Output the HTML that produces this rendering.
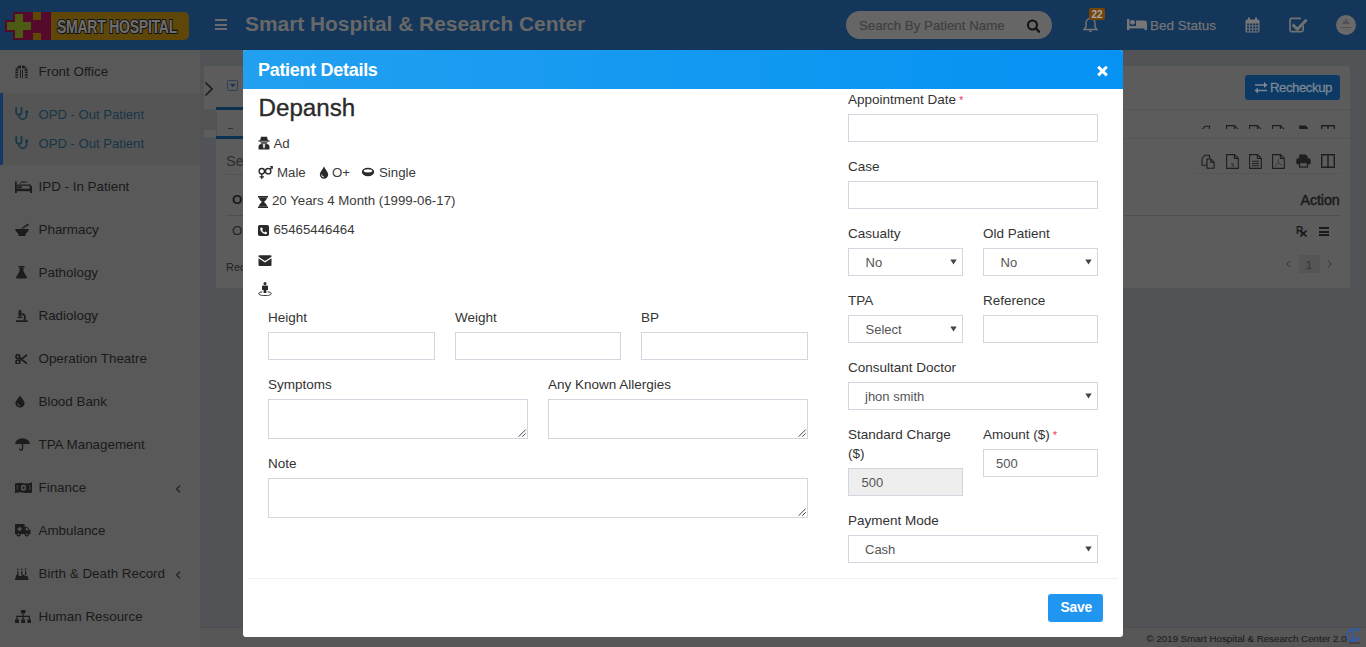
<!DOCTYPE html>
<html><head><meta charset="utf-8">
<style>
*{box-sizing:border-box;margin:0;padding:0}
html,body{width:1366px;height:647px;overflow:hidden}
body{position:relative;font-family:"Liberation Sans",sans-serif;font-size:13.5px;color:#333;background:#525356}
.abs{position:absolute}
.tx{position:absolute;white-space:nowrap;line-height:1}
#hdr{left:0;top:0;width:1366px;height:50px;background:#13365a}
#side{left:0;top:50px;width:200px;height:597px;background:#595959}
.si{position:absolute;left:0;width:200px;height:43px;color:#2b2b2b;font-size:13.5px}
.si .t{position:absolute;left:38px;top:13px;white-space:nowrap}
.si .ic{position:absolute;left:14px;top:14px;width:13px;height:13px}
.si .ch{position:absolute;left:175px;top:12px;font-size:13px}
#modal{left:243px;top:50px;width:880px;height:587px;background:#fff;border-radius:3px;overflow:hidden}
#mh{left:0;top:0;width:880px;height:39px;background:linear-gradient(90deg,#22a0f0,#0592f3)}
#mh .title{position:absolute;left:15px;top:10px;color:#fff;font-weight:bold;font-size:18px;letter-spacing:-0.3px}
.lbl{position:absolute;white-space:nowrap;color:#333;font-size:13.5px}
.inp{position:absolute;border:1px solid #d2d6de;background:#fff;height:28px}
.sel{position:absolute;border:1px solid #d2d6de;background:#fff;height:28px}
.sel .v{position:absolute;left:16px;top:6px;color:#555;font-size:13.5px}
.sel .ar{position:absolute;right:5px;top:6px;font-size:10px;color:#333}
.req{color:#e8384f}
</style></head><body>
<div id="hdr" class="abs">
  <!-- logo -->
  <div class="abs" style="left:13px;top:12px;width:176px;height:28px;background:#5e4709;border-radius:0 5px 5px 0"></div>
  <div class="abs" style="left:13px;top:12px;width:38px;height:28px;background:#560a2b"></div>
  <div class="abs" style="left:33px;top:12px;width:8px;height:8px;background:#5e4709"></div>
  <div class="abs" style="left:33px;top:33px;width:8px;height:7px;background:#5e4709"></div>
  <div class="abs" style="left:5px;top:20px;width:28px;height:12px;background:#560a2b"></div>
  <div class="abs" style="left:15px;top:14px;width:8px;height:24px;background:#4c5a14"></div>
  <div class="abs" style="left:7px;top:22px;width:24px;height:8px;background:#4c5a14"></div>
  <div class="tx" style="left:56.5px;top:17px;font-weight:bold;font-size:19px;color:#6e6e6e;-webkit-text-stroke:2.2px #141414;paint-order:stroke fill;transform:scaleX(0.735);transform-origin:0 0;letter-spacing:-0.3px">SMART HOSPITAL</div>
  <!-- hamburger -->
  <div class="abs" style="left:215px;top:19px;width:12px;height:2px;background:#6b6b6b"></div>
  <div class="abs" style="left:215px;top:23.5px;width:12px;height:2px;background:#6b6b6b"></div>
  <div class="abs" style="left:215px;top:28px;width:12px;height:2px;background:#6b6b6b"></div>
  <div class="abs" style="left:245px;top:12px;font-weight:bold;font-size:20.9px;color:#686868;white-space:nowrap">Smart Hospital &amp; Research Center</div>
  <!-- search -->
  <div class="abs" style="left:846px;top:11px;width:206px;height:28px;background:#666;border-radius:14px"></div>
  <div class="abs" style="left:859px;top:17.5px;font-size:13.3px;color:#404040;-webkit-text-stroke:0.2px #404040;white-space:nowrap">Search By Patient Name</div>
  <svg class="abs" style="left:1026px;top:19px" width="16" height="14" viewBox="0 0 16 14"><circle cx="6.5" cy="6" r="4.5" fill="none" stroke="#111" stroke-width="2"/><line x1="9.7" y1="9.3" x2="13" y2="12.6" stroke="#111" stroke-width="2.2" stroke-linecap="round"/></svg>
  <!-- bell -->
  <svg class="abs" style="left:1082px;top:17px" width="17" height="16" viewBox="0 0 17 16"><path d="M8.5 1.5c-3 0-4.5 2.3-4.5 5v3.5l-2 2.5h13l-2-2.5V6.5c0-2.7-1.5-5-4.5-5z" fill="none" stroke="#777" stroke-width="1.4"/><path d="M7 13.5a1.5 1.5 0 0 0 3 0z" fill="#777"/></svg>
  <div class="abs" style="left:1089px;top:8px;width:16px;height:12px;background:#764507;border-radius:2px;color:#a9a9a9;font-weight:bold;font-size:10px;line-height:13px;text-align:center">22</div>
  <!-- bed -->
  <svg class="abs" style="left:1127px;top:19px" width="20" height="11.3" viewBox="0 0 20 12" preserveAspectRatio="none"><rect x="0" y="0" width="2.5" height="12" fill="#777"/><circle cx="5.5" cy="3.5" r="2.5" fill="#777"/><path d="M9 1.5h8a3 3 0 0 1 3 3V8H9z" fill="#777"/><rect x="0" y="7.5" width="20" height="2.5" fill="#777"/><rect x="17.5" y="7.5" width="2.5" height="4.5" fill="#777"/></svg>
  <div class="abs" style="left:1150px;top:17.5px;font-size:13.5px;color:#747474;white-space:nowrap;-webkit-text-stroke:0.25px #747474">Bed Status</div>
  <!-- calendar -->
  <svg class="abs" style="left:1245px;top:17px" width="15" height="16" viewBox="0 0 15 16"><rect x="0.5" y="2.5" width="14" height="13" rx="1.5" fill="#777"/><rect x="3" y="0.5" width="2" height="4" fill="#777"/><rect x="10" y="0.5" width="2" height="4" fill="#777"/><g fill="#13365a"><rect x="2" y="6.5" width="2.2" height="2"/><rect x="5.1" y="6.5" width="2.2" height="2"/><rect x="8.2" y="6.5" width="2.2" height="2"/><rect x="11.2" y="6.5" width="2" height="2"/><rect x="2" y="9.5" width="2.2" height="2"/><rect x="5.1" y="9.5" width="2.2" height="2"/><rect x="8.2" y="9.5" width="2.2" height="2"/><rect x="11.2" y="9.5" width="2" height="2"/><rect x="2" y="12.5" width="2.2" height="2"/><rect x="5.1" y="12.5" width="2.2" height="2"/><rect x="8.2" y="12.5" width="2.2" height="2"/><rect x="11.2" y="12.5" width="2" height="2"/></g></svg>
  <!-- check -->
  <svg class="abs" style="left:1289px;top:17px" width="19" height="16" viewBox="0 0 19 16"><path d="M14.2 8.5v4.3a1.8 1.8 0 0 1-1.8 1.8H2.8A1.8 1.8 0 0 1 1 12.8V3.2A1.8 1.8 0 0 1 2.8 1.4h9.2" fill="none" stroke="#727272" stroke-width="1.7"/><path d="M3.6 7.6l4.8 4.6 9.2-9.4" fill="none" stroke="#727272" stroke-width="2.9"/></svg>
  <!-- avatar -->
  <div class="abs" style="left:1336px;top:15px;width:20px;height:20px;border-radius:50%;background:#6a6a6a"></div>
  <svg class="abs" style="left:1336px;top:15px" width="20" height="20" viewBox="0 0 20 20"><g fill="#4e4e4e"><circle cx="10" cy="5" r="0.9"/><path d="M7.5 6.3h5l0.8 1.5H6.7z"/><rect x="6.5" y="8.2" width="7" height="0.9"/><rect x="4.5" y="12" width="11" height="1.1" opacity="0.8"/><rect x="7" y="14.6" width="6" height="0.5" opacity="0.6"/></g></svg>
</div>
<div id="side" class="abs"></div>
<div id="sidec">
<div class="abs" style="left:0;top:93px;width:200px;height:72px;background:#555"></div>
<div class="abs" style="left:0;top:93px;width:3px;height:72px;background:#133a63"></div>
<div class="tx" style="left:38.5px;top:64.66px;font-size:13.4px;color:#1a1a1a;">Front Office</div>
<div class="tx" style="left:38.5px;top:179.66px;font-size:13.4px;color:#1a1a1a;">IPD - In Patient</div>
<div class="tx" style="left:38.5px;top:222.66px;font-size:13.4px;color:#1a1a1a;">Pharmacy</div>
<div class="tx" style="left:38.5px;top:265.66px;font-size:13.4px;color:#1a1a1a;">Pathology</div>
<div class="tx" style="left:38.5px;top:308.66px;font-size:13.4px;color:#1a1a1a;">Radiology</div>
<div class="tx" style="left:38.5px;top:351.66px;font-size:13.4px;color:#1a1a1a;">Operation Theatre</div>
<div class="tx" style="left:38.5px;top:394.66px;font-size:13.4px;color:#1a1a1a;">Blood Bank</div>
<div class="tx" style="left:38.5px;top:437.66px;font-size:13.4px;color:#1a1a1a;">TPA Management</div>
<div class="tx" style="left:38.5px;top:480.66px;font-size:13.4px;color:#1a1a1a;">Finance</div>
<svg class="abs" style="left:175px;top:484.5px" width="6" height="8" viewBox="0 0 6 8"><path d="M5 0.8L1.5 4 5 7.2" fill="none" stroke="#222" stroke-width="1.2"/></svg>
<div class="tx" style="left:38.5px;top:523.66px;font-size:13.4px;color:#1a1a1a;">Ambulance</div>
<div class="tx" style="left:38.5px;top:566.66px;font-size:13.4px;color:#1a1a1a;">Birth &amp; Death Record</div>
<svg class="abs" style="left:175px;top:570.5px" width="6" height="8" viewBox="0 0 6 8"><path d="M5 0.8L1.5 4 5 7.2" fill="none" stroke="#222" stroke-width="1.2"/></svg>
<div class="tx" style="left:38.5px;top:609.66px;font-size:13.4px;color:#1a1a1a;">Human Resource</div>
<div class="tx" style="left:38.5px;top:107.91px;font-size:13.1px;color:#163648;">OPD - Out Patient</div>
<svg class="abs" style="left:14px;top:106px" width="15" height="15" viewBox="0 0 15 15" preserveAspectRatio="none"><path d="M3.2 2.1H2.1v4a2.75 2.75 0 0 0 5.5 0v-4H6.5" fill="none" stroke="#163648" stroke-width="1.6"/><path d="M4.85 8.8v0.5a3.9 3.9 0 0 0 7.8 0V6.5" fill="none" stroke="#163648" stroke-width="1.6"/><circle cx="12.65" cy="5.9" r="1.6" fill="#163648"/></svg>
<div class="tx" style="left:38.5px;top:136.51px;font-size:13.1px;color:#163648;">OPD - Out Patient</div>
<svg class="abs" style="left:14px;top:135px" width="15" height="15" viewBox="0 0 15 15" preserveAspectRatio="none"><path d="M3.2 2.1H2.1v4a2.75 2.75 0 0 0 5.5 0v-4H6.5" fill="none" stroke="#163648" stroke-width="1.6"/><path d="M4.85 8.8v0.5a3.9 3.9 0 0 0 7.8 0V6.5" fill="none" stroke="#163648" stroke-width="1.6"/><circle cx="12.65" cy="5.9" r="1.6" fill="#163648"/></svg>
<svg class="abs" style="left:15px;top:65px" width="13" height="13" viewBox="0 0 13 13" preserveAspectRatio="none"><path d="M6.5 0.3a6.2 6.2 0 0 1 6.2 6.2V13h-2.8V6.5a3.4 3.4 0 0 0-6.8 0V13H0.3V6.5A6.2 6.2 0 0 1 6.5 0.3z" fill="#1c1c1c"/><g fill="#595959"><rect x="0" y="8.2" width="13" height="1"/><rect x="0" y="10.8" width="13" height="1"/><rect x="0" y="5.7" width="13" height="0.9"/><path d="M2.2 2.2l1.6 1.6-.7.7-1.6-1.6zM10.8 2.2l-1.6 1.6.7.7 1.6-1.6z"/><rect x="6" y="0" width="1" height="2.9"/></g><g fill="#1c1c1c"><rect x="5.1" y="4.6" width="0.9" height="8.4"/><rect x="7" y="4.6" width="0.9" height="8.4"/></g></svg>
<svg class="abs" style="left:15px;top:180px" width="17" height="13" viewBox="0 0 17 13" preserveAspectRatio="none"><g fill="#1c1c1c"><rect x="0" y="1.5" width="1.8" height="11.5"/><rect x="0" y="9.3" width="17" height="1.9"/><rect x="15.2" y="6" width="1.8" height="7"/><path d="M3 5.2h12.2v4.1H3z" fill="none" stroke="#1c1c1c" stroke-width="1.3"/><circle cx="5.3" cy="7.2" r="1.3"/><path d="M5.2 3.6l2.1-2.6 1.6 2 1.5-1.6 1.8 1.2" fill="none" stroke="#1c1c1c" stroke-width="1"/></g></svg>
<svg class="abs" style="left:15px;top:222.5px" width="14" height="13" viewBox="0 0 14 13" preserveAspectRatio="none"><g fill="#1c1c1c"><path d="M0.3 6h13.4a6 5 0 0 1-3 4.4v1.6a1 1 0 0 1-1 1H4.3a1 1 0 0 1-1-1v-1.6A6 5 0 0 1 0.3 6z"/><path d="M6 5.6l6.8-5.1 1.1 1.4L8.2 5.6z"/></g></svg>
<svg class="abs" style="left:15.5px;top:266px" width="11" height="12.5" viewBox="0 0 11 12.5" preserveAspectRatio="none"><g fill="#1c1c1c"><rect x="2.5" y="0" width="6" height="1.5"/><path d="M3.6 1.5h3.8v3.8l3.4 5.8a1 1 0 0 1-.9 1.4H1.1a1 1 0 0 1-.9-1.4l3.4-5.8z"/></g></svg>
<svg class="abs" style="left:15.5px;top:310px" width="13" height="12" viewBox="0 0 13 12" preserveAspectRatio="none"><g fill="#1c1c1c"><rect x="2.6" y="0" width="2.8" height="6.2" rx="1"/><rect x="1.8" y="6.6" width="4.4" height="1.5"/><path d="M5.6 3.8a3.7 3.7 0 0 1 2.3 6.4" fill="none" stroke="#1c1c1c" stroke-width="1.8"/><rect x="0" y="10.3" width="11.8" height="1.7"/></g></svg>
<svg class="abs" style="left:14.5px;top:353.5px" width="12.5" height="10.5" viewBox="0 0 12.5 10.5" preserveAspectRatio="none"><g fill="none" stroke="#1c1c1c" stroke-width="1.7"><circle cx="2.9" cy="2.6" r="1.9"/><circle cx="2.9" cy="7.9" r="1.9"/><path d="M4.5 3.8L12.2 9.8M4.5 6.7L12.2 0.7"/></g></svg>
<svg class="abs" style="left:14.7px;top:395px" width="10" height="12.5" viewBox="0 0 10 12.5" preserveAspectRatio="none"><path d="M5 0.2C3.5 3.3 0.4 5.8 0.4 8.2a4.6 4.3 0 0 0 9.2 0C9.6 5.8 6.5 3.3 5 0.2z" fill="#1c1c1c"/><path d="M2.6 8.4a2.4 2.3 0 0 0 2.4 2.2" fill="none" stroke="#595959" stroke-width="1"/></svg>
<svg class="abs" style="left:14.7px;top:438px" width="15" height="13" viewBox="0 0 15 13" preserveAspectRatio="none"><path d="M0 6.2A7.5 6 0 0 1 15 6.2c-.8-.7-1.8-.7-2.5 0-.8-.7-1.8-.7-2.5 0-.8-.7-1.8-.7-2.5 0-.8-.7-1.8-.7-2.5 0-.8-.7-1.8-.7-2.5 0-.8-.7-1.8-.7-2.5 0z" fill="#1c1c1c"/><path d="M7.5 5v5.8a1.4 1.4 0 0 1-2.8 0" fill="none" stroke="#1c1c1c" stroke-width="1.4"/></svg>
<svg class="abs" style="left:14.7px;top:481.5px" width="17" height="11.5" viewBox="0 0 17 11.5" preserveAspectRatio="none"><path d="M0 1.5Q4 0 8.5 1.2T17 0.2v10.3q-4 1.5-8.5 0.3T0 11.3z" fill="#1c1c1c"/><ellipse cx="8.5" cy="5.8" rx="2.6" ry="3" fill="#595959"/><circle cx="8.5" cy="5.8" r="1.2" fill="#1c1c1c"/><rect x="1.5" y="3" width="1.6" height="5" fill="#595959" opacity=".45"/><rect x="13.9" y="3" width="1.6" height="5" fill="#595959" opacity=".45"/></svg>
<svg class="abs" style="left:15.3px;top:524px" width="15.5" height="12.5" viewBox="0 0 15.5 12.5" preserveAspectRatio="none"><g fill="#1c1c1c"><path d="M0 0.8a.8.8 0 0 1 .8-.8h8.7v2.8h2.6l3.4 3.8V10H0z"/><circle cx="3.6" cy="10.3" r="2.2"/><circle cx="11.8" cy="10.3" r="2.2"/></g><path d="M2.5 5h4.2M4.6 2.9v4.2" stroke="#595959" stroke-width="1.5"/><circle cx="3.6" cy="10.3" r="0.9" fill="#595959"/><circle cx="11.8" cy="10.3" r="0.9" fill="#595959"/><path d="M10.6 3.8h1.3l2 2.4h-3.3z" fill="#595959"/></svg>
<svg class="abs" style="left:15.3px;top:567.5px" width="13.5" height="12" viewBox="0 0 13.5 12" preserveAspectRatio="none"><g fill="#1c1c1c"><path d="M0.8 7.5q1.5-1.3 3-0t3 0 3 0 3 0V10.6H0.8z"/><rect x="2.3" y="3.2" width="1.2" height="3.8"/><rect x="6.15" y="3.2" width="1.2" height="3.8"/><rect x="10" y="3.2" width="1.2" height="3.8"/><path d="M2.9 0l.8 1.5-.8 1.1-.8-1.1zM6.75 0l.8 1.5-.8 1.1-.8-1.1zM10.6 0l.8 1.5-.8 1.1-.8-1.1z"/><rect x="0" y="10.3" width="13.5" height="1.7"/></g></svg>
<svg class="abs" style="left:15px;top:609.5px" width="16.3" height="13" viewBox="0 0 16.3 13" preserveAspectRatio="none"><g fill="#1c1c1c"><rect x="5.9" y="0" width="4.5" height="3.4"/><rect x="0" y="9.4" width="3.9" height="3.6"/><rect x="6.2" y="9.4" width="3.9" height="3.6"/><rect x="12.4" y="9.4" width="3.9" height="3.6"/></g><path d="M8.15 3.4v6M1.95 9.4V6.4h12.4v3" fill="none" stroke="#1c1c1c" stroke-width="1.2"/></svg>
</div><!--/sidec-->

<div id="content">
<div class="abs" style="left:203px;top:65px;width:1148px;height:44px;background:#5c5c5c;border:1px solid #4f5656;border-bottom:none;border-radius:3px 3px 0 0"></div>
<svg class="abs" style="left:204px;top:81px" width="10" height="16" viewBox="0 0 10 16"><path d="M1.5 1.5L8 8 1.5 14.5" fill="none" stroke="#1a1a1a" stroke-width="1.6"/></svg>
<div class="abs" style="left:227px;top:80px;width:11px;height:11px;border:1.3px solid #2c3e58;border-radius:1.5px"></div>
<svg class="abs" style="left:230px;top:84px" width="6" height="4" viewBox="0 0 6 4"><path d="M0 0h5.5L2.75 3z" fill="#12324f"/></svg>
<div class="abs" style="left:1245px;top:75px;width:95px;height:25px;background:#0c3a64;border-radius:3px"></div>
<svg class="abs" style="left:1254px;top:81px" width="14" height="13" viewBox="0 0 14 13"><g fill="#7b8794"><path d="M1 3.2h9V1l3.5 3-3.5 3V4.8H1z"/><path d="M13 8.8H4V6.5L0.5 9.5 4 12.5v-2.2h9z"/></g></svg>
<div class="tx" style="left:1270px;top:81.33px;font-size:13.2px;color:#7b8794;letter-spacing:-0.45px;-webkit-text-stroke:0.3px #7b8794">Recheckup</div>
<div class="abs" style="left:203px;top:109px;width:1148px;height:1px;background:#4f5656"></div>
<div class="abs" style="left:216px;top:107px;width:200px;height:3px;background:#0c3050"></div>
<div class="abs" style="left:216px;top:109px;width:1135px;height:29px;background:#5c5c5c;border-left:1px solid #4f5656;border-right:1px solid #4f5656"></div>
<div class="abs" style="left:203px;top:109px;width:13px;height:20px;background:#545454"></div>
<div class="abs" style="left:203px;top:129px;width:13px;height:9px;background:#5e5e5e;border:1px solid #4f5656;border-right:none"></div>
<div class="abs" style="left:216px;top:110px;width:1px;height:28px;background:#4f5656"></div>
<div class="abs" style="left:228px;top:128px;width:5px;height:1px;background:#333"></div>
<div class="abs" style="left:203px;top:138px;width:1147px;height:1px;background:#4f5656"></div>
<div class="abs" style="left:216px;top:136px;width:200px;height:3px;background:#0c3050"></div>
<div class="abs" style="left:215px;top:138px;width:1136px;height:151px;background:#5c5c5c;border:1px solid #4f5656;border-top:none;border-radius:0 0 3px 3px"></div>
<div class="tx" style="left:226px;top:154.23px;font-size:14.5px;color:#2e2e2e;">Search</div>
<div class="abs" style="left:226px;top:174px;width:600px;height:1px;background:#535353"></div>
<div class="tx" style="left:232px;top:192.74px;font-size:13.3px;color:#1a1a1a;font-weight:bold;">OPD No</div>
<div class="abs" style="left:226px;top:215px;width:1114px;height:1px;background:#4f4f4f"></div>
<div class="tx" style="left:232px;top:223.74px;font-size:13.3px;color:#222;">OPDN1</div>
<div class="abs" style="left:226px;top:245px;width:1114px;height:1px;background:#595959"></div>
<div class="tx" style="left:226px;top:261.69px;font-size:11px;color:#222;">Records: 1 to 1 of 1</div>
<div class="tx" style="left:1300.5px;top:192.90px;font-size:14.3px;color:#1a1a1a;-webkit-text-stroke:0.45px #1a1a1a;letter-spacing:-0.1px">Action</div>
<div class="tx" style="left:1296px;top:225.53px;font-size:10px;color:#1a1a1a;font-weight:bold">R</div>
<svg class="abs" style="left:1300px;top:230px" width="7" height="7" viewBox="0 0 7 7"><path d="M0.5 0.5l6 6M6.5 0.5l-6 6" stroke="#1a1a1a" stroke-width="1.6"/></svg>
<div class="abs" style="left:1319px;top:227px;width:10px;height:2px;background:#1a1a1a"></div>
<div class="abs" style="left:1319px;top:230.5px;width:10px;height:2px;background:#1a1a1a"></div>
<div class="abs" style="left:1319px;top:234px;width:10px;height:2px;background:#1a1a1a"></div>
<svg class="abs" style="left:1286px;top:260px" width="5" height="8" viewBox="0 0 5 8"><path d="M4 0.5L1 4l3 3.5" fill="none" stroke="#333" stroke-width="1"/></svg>
<div class="abs" style="left:1299px;top:255px;width:21px;height:18px;background:#555"></div>
<div class="tx" style="left:1306px;top:259.69px;font-size:11px;color:#333;">1</div>
<svg class="abs" style="left:1327px;top:260px" width="5" height="8" viewBox="0 0 5 8"><path d="M1 0.5L4 4 1 7.5" fill="none" stroke="#333" stroke-width="1"/></svg>
<svg class="abs" style="left:1201px;top:154px" width="15" height="15" viewBox="0 0 15 15"><g fill="none" stroke="#1e1e1e" stroke-width="1.1"><path d="M1 4.5L4 1.2h4.5v3.3"/><path d="M1 4.5v6.8h4.6"/><path d="M6 5h3.8l3.3 3.2v6H6z"/><path d="M9.8 5v3.2h3.3"/></g></svg>
<div class="abs" style="left:1201px;top:125px;width:15px;height:4px;overflow:hidden"><svg class="abs" style="left:0px;top:0px" width="15" height="15" viewBox="0 0 15 15"><g fill="none" stroke="#1e1e1e" stroke-width="1.1"><path d="M1 4.5L4 1.2h4.5v3.3"/><path d="M1 4.5v6.8h4.6"/><path d="M6 5h3.8l3.3 3.2v6H6z"/><path d="M9.8 5v3.2h3.3"/></g></svg></div>
<svg class="abs" style="left:1226px;top:154px" width="13" height="15" viewBox="0 0 13 15"><g fill="none" stroke="#1e1e1e" stroke-width="1.1"><path d="M0.6 0.6h7.8l3.9 3.9v9.9H0.6z"/><path d="M8.4 0.6v3.9h3.9"/></g><text x="6.4" y="12.6" font-family="Liberation Serif" font-size="8" text-anchor="middle" fill="#1e1e1e">x</text></svg>
<div class="abs" style="left:1226px;top:125px;width:13px;height:4px;overflow:hidden"><svg class="abs" style="left:0px;top:0px" width="13" height="15" viewBox="0 0 13 15"><g fill="none" stroke="#1e1e1e" stroke-width="1.1"><path d="M0.6 0.6h7.8l3.9 3.9v9.9H0.6z"/><path d="M8.4 0.6v3.9h3.9"/></g><text x="6.4" y="12.6" font-family="Liberation Serif" font-size="8" text-anchor="middle" fill="#1e1e1e">x</text></svg></div>
<svg class="abs" style="left:1249px;top:154px" width="13" height="15" viewBox="0 0 13 15"><g fill="none" stroke="#1e1e1e" stroke-width="1.1"><path d="M0.6 0.6h7.8l3.9 3.9v9.9H0.6z"/><path d="M8.4 0.6v3.9h3.9M3 7.3h7M3 9.5h7M3 11.7h7"/></g></svg>
<div class="abs" style="left:1249px;top:125px;width:13px;height:4px;overflow:hidden"><svg class="abs" style="left:0px;top:0px" width="13" height="15" viewBox="0 0 13 15"><g fill="none" stroke="#1e1e1e" stroke-width="1.1"><path d="M0.6 0.6h7.8l3.9 3.9v9.9H0.6z"/><path d="M8.4 0.6v3.9h3.9M3 7.3h7M3 9.5h7M3 11.7h7"/></g></svg></div>
<svg class="abs" style="left:1272px;top:154px" width="13" height="15" viewBox="0 0 13 15"><g fill="none" stroke="#1e1e1e" stroke-width="1.1"><path d="M0.6 0.6h7.8l3.9 3.9v9.9H0.6z"/><path d="M8.4 0.6v3.9h3.9"/></g><path d="M6.3 5v3.5L3.2 12.3M6.3 8.5l3.6 3" fill="none" stroke="#3a2a44" stroke-width="0.8"/></svg>
<div class="abs" style="left:1272px;top:125px;width:13px;height:4px;overflow:hidden"><svg class="abs" style="left:0px;top:0px" width="13" height="15" viewBox="0 0 13 15"><g fill="none" stroke="#1e1e1e" stroke-width="1.1"><path d="M0.6 0.6h7.8l3.9 3.9v9.9H0.6z"/><path d="M8.4 0.6v3.9h3.9"/></g><path d="M6.3 5v3.5L3.2 12.3M6.3 8.5l3.6 3" fill="none" stroke="#3a2a44" stroke-width="0.8"/></svg></div>
<svg class="abs" style="left:1296px;top:154px" width="15" height="14" viewBox="0 0 15 14"><g fill="#1e1e1e"><path d="M3.2 0.6h6.5l2 2v2.2H3.2z"/><rect x="0.3" y="4.3" width="14.4" height="6.2" rx="1.8"/></g><rect x="3.6" y="8.5" width="7.8" height="4.6" fill="#595959" stroke="#1e1e1e" stroke-width="1.2"/></svg>
<div class="abs" style="left:1296px;top:125px;width:15px;height:4px;overflow:hidden"><svg class="abs" style="left:0px;top:0px" width="15" height="14" viewBox="0 0 15 14"><g fill="#1e1e1e"><path d="M3.2 0.6h6.5l2 2v2.2H3.2z"/><rect x="0.3" y="4.3" width="14.4" height="6.2" rx="1.8"/></g><rect x="3.6" y="8.5" width="7.8" height="4.6" fill="#595959" stroke="#1e1e1e" stroke-width="1.2"/></svg></div>
<svg class="abs" style="left:1321px;top:154px" width="14" height="14" viewBox="0 0 14 14"><path d="M0.7 0.7h12.6v12.6H0.7zM7 0.7v12.6" fill="none" stroke="#1e1e1e" stroke-width="1.4"/></svg>
<div class="abs" style="left:1321px;top:125px;width:14px;height:4px;overflow:hidden"><svg class="abs" style="left:0px;top:0px" width="14" height="14" viewBox="0 0 14 14"><path d="M0.7 0.7h12.6v12.6H0.7zM7 0.7v12.6" fill="none" stroke="#1e1e1e" stroke-width="1.4"/></svg></div>
<div class="abs" style="left:1195px;top:173px;width:145px;height:1px;background:#555"></div>
<div class="abs" style="left:203px;top:109px;width:1148px;height:1px;background:#4f5656"></div>
<div class="abs" style="left:203px;top:138px;width:1148px;height:1px;background:#4f5656"></div>
<div class="abs" style="left:216px;top:107px;width:200px;height:3px;background:#0c3050"></div>
<div class="abs" style="left:216px;top:136px;width:200px;height:3px;background:#0c3050"></div>
<div class="abs" style="left:200px;top:627px;width:1166px;height:20px;background:#575757;border-top:1px solid #4e4e4e"></div>
<div class="tx" style="left:1146.5px;top:633.75px;font-size:9.75px;color:#1e1e1e;-webkit-text-stroke:0.1px #1e1e1e">&copy; 2019 Smart Hospital &amp; Research Center 2.0</div>
<svg class="abs" style="left:1345px;top:627px" width="18" height="17" viewBox="0 0 18 17"><path d="M13 4.5A6 6 0 1 0 13.5 11H9" fill="none" stroke="#2d5cb0" stroke-width="1.6"/><path d="M3.5 3.5c3 0 5 2.5 5 5.5s-2 5-5 5" fill="none" stroke="#2d5cb0" stroke-width="1.3"/><path d="M14 0.5v3M12.5 2h3" stroke="#2d5cb0" stroke-width="1"/><rect x="4" y="15.5" width="11" height="1" fill="#333"/></svg>
</div><!--/content-->
<div id="modal" class="abs">
  <div id="mh" class="abs"><div class="title">Patient Details</div></div>
</div>
<div id="mbody">
<svg class="abs" style="left:1096px;top:65px" width="13" height="12" viewBox="0 0 13 12"><path d="M2.2 1.8l8.6 8.6M10.8 1.8l-8.6 8.6" stroke="#fff" stroke-width="3"/></svg>
<div class="tx" style="left:258.5px;top:96.01px;font-size:24.2px;color:#2a2a2a;-webkit-text-stroke:0.35px #2a2a2a;">Depansh</div>
<svg class="abs" style="left:258px;top:136px" width="12" height="14" viewBox="0 0 12 14"><g fill="#2a2a2a"><path d="M3 0.8h6l1 4H2z"/><rect x="0.5" y="4.3" width="11" height="1.3"/><path d="M2.5 6.2h7a1.5 1.5 0 0 1-1.4 1.6H3.9A1.5 1.5 0 0 1 2.5 6.2z"/><path d="M0.5 13.5v-2.5a3 3 0 0 1 3-3h5a3 3 0 0 1 3 3v2.5z"/></g><path d="M5 8.3l1 4 1-4" fill="#fff" stroke="#fff" stroke-width="0.6"/></svg>
<div class="tx" style="left:273.5px;top:136.68px;font-size:13.25px;color:#3a3a3a;">Ad</div>
<svg class="abs" style="left:258px;top:164.5px" width="15" height="15" viewBox="0 0 15 15"><g fill="none" stroke="#2a2a2a" stroke-width="1.35"><circle cx="3.8" cy="6.2" r="2.7"/><circle cx="10.2" cy="6.2" r="2.7"/><path d="M3.8 8.9v5M1.6 11.8h4.4M12.1 4.3l2.2-2.2"/></g><path d="M11.6 1h3.2v3.2z" fill="#2a2a2a"/></svg>
<div class="tx" style="left:277px;top:165.58px;font-size:13.25px;color:#3a3a3a;">Male</div>
<svg class="abs" style="left:318.5px;top:166px" width="10" height="13" viewBox="0 0 10 13"><path d="M5 0.5C3.6 3.5 0.8 6 0.8 8.6a4.2 4.2 0 0 0 8.4 0C9.2 6 6.4 3.5 5 0.5z" fill="#2a2a2a"/><path d="M2.6 8.6a2.4 2.4 0 0 0 2.4 2.4" fill="none" stroke="#fff" stroke-width="0.9"/></svg>
<div class="tx" style="left:332px;top:165.58px;font-size:13.25px;color:#3a3a3a;">O+</div>
<svg class="abs" style="left:361px;top:167px" width="14" height="10" viewBox="0 0 14 10"><ellipse cx="7" cy="5" rx="6.2" ry="4.2" fill="#2a2a2a"/><ellipse cx="7" cy="3.8" rx="4.3" ry="1.6" fill="#fff"/></svg>
<div class="tx" style="left:379px;top:165.58px;font-size:13.25px;color:#3a3a3a;">Single</div>
<svg class="abs" style="left:258px;top:195.5px" width="10" height="12" viewBox="0 0 10 12"><g fill="#2a2a2a"><rect x="0" y="0" width="10" height="1.6"/><rect x="0" y="10.4" width="10" height="1.6"/><path d="M1 1.6h8c0 2.6-2.8 3.7-2.8 4.4S9 7.8 9 10.4H1c0-2.6 2.8-3.7 2.8-4.4S1 4.2 1 1.6z"/></g></svg>
<div class="tx" style="left:272px;top:194.08px;font-size:13.25px;color:#3a3a3a;">20 Years 4 Month (1999-06-17)</div>
<svg class="abs" style="left:258px;top:224.5px" width="11" height="11" viewBox="0 0 11 11"><rect x="0" y="0" width="11" height="11" rx="1.8" fill="#2a2a2a"/><path d="M3 2.5l1.3 0.2 0.6 1.6-0.8 0.8a4 4 0 0 0 2.3 2.3l0.8-0.8 1.6 0.6 0.2 1.3c-0.3 0.5-0.9 0.8-1.6 0.7C4.7 8.8 2.4 6.5 2.2 4.1 2.2 3.4 2.5 2.8 3 2.5z" fill="#fff"/></svg>
<div class="tx" style="left:273.5px;top:222.88px;font-size:13.25px;color:#3a3a3a;">65465446464</div>
<svg class="abs" style="left:257.5px;top:254.5px" width="14" height="11" viewBox="0 0 14 11"><path d="M0.5 1.2a1 1 0 0 1 1-1h11a1 1 0 0 1 1 1v0.6L7 6 0.5 1.8z" fill="#2a2a2a"/><path d="M0.5 3.3L7 7.6l6.5-4.3v6.7a1 1 0 0 1-1 1h-11a1 1 0 0 1-1-1z" fill="#2a2a2a"/></svg>
<svg class="abs" style="left:257.5px;top:281.5px" width="14" height="14" viewBox="0 0 14 14"><g fill="#2a2a2a"><circle cx="7" cy="1.6" r="1.5"/><path d="M5 3.6h4a1 1 0 0 1 1 1v3.4H8.4v3H5.6v-3H4V4.6a1 1 0 0 1 1-1z"/></g><path d="M4.3 9.8C2 10.2 0.7 10.9 0.7 11.7c0 1.1 2.8 1.9 6.3 1.9s6.3-0.8 6.3-1.9c0-0.8-1.3-1.5-3.6-1.9" fill="none" stroke="#2a2a2a" stroke-width="1"/></svg>
<div class="tx" style="left:268px;top:310.57px;font-size:13.5px;color:#333;">Height</div>
<div class="abs" style="left:268px;top:332px;width:167px;height:28px;border:1px solid #d2d6de;background:#fff"></div>
<div class="tx" style="left:455px;top:310.57px;font-size:13.5px;color:#333;">Weight</div>
<div class="abs" style="left:455px;top:332px;width:166px;height:28px;border:1px solid #d2d6de;background:#fff"></div>
<div class="tx" style="left:641px;top:310.57px;font-size:13.5px;color:#333;">BP</div>
<div class="abs" style="left:641px;top:332px;width:167px;height:28px;border:1px solid #d2d6de;background:#fff"></div>
<div class="tx" style="left:268px;top:377.57px;font-size:13.5px;color:#333;">Symptoms</div>
<div class="tx" style="left:548px;top:377.57px;font-size:13.5px;color:#333;">Any Known Allergies</div>
<div class="abs" style="left:268px;top:399px;width:260px;height:40px;border:1px solid #d2d6de;background:#fff"></div>
<svg class="abs" style="left:518px;top:429px" width="9" height="9" viewBox="0 0 9 9"><path d="M7.7 0.6L0.6 7.7M7.7 4.3L4.3 7.7" stroke="#444" stroke-width="1"/></svg>
<div class="abs" style="left:548px;top:399px;width:260px;height:40px;border:1px solid #d2d6de;background:#fff"></div>
<svg class="abs" style="left:798px;top:429px" width="9" height="9" viewBox="0 0 9 9"><path d="M7.7 0.6L0.6 7.7M7.7 4.3L4.3 7.7" stroke="#444" stroke-width="1"/></svg>
<div class="tx" style="left:268px;top:456.57px;font-size:13.5px;color:#333;">Note</div>
<div class="abs" style="left:268px;top:478px;width:540px;height:40px;border:1px solid #d2d6de;background:#fff"></div>
<svg class="abs" style="left:798px;top:508px" width="9" height="9" viewBox="0 0 9 9"><path d="M7.7 0.6L0.6 7.7M7.7 4.3L4.3 7.7" stroke="#444" stroke-width="1"/></svg>
<div class="tx" style="left:848px;top:92.57px;font-size:13.5px;color:#333;">Appointment Date<span style="color:#e8384f;font-size:11px;position:relative;top:0px;margin-left:3px">*</span></div>
<div class="abs" style="left:848px;top:114px;width:250px;height:28px;border:1px solid #d2d6de;background:#fff"></div>
<div class="tx" style="left:848px;top:159.57px;font-size:13.5px;color:#333;">Case</div>
<div class="abs" style="left:848px;top:181px;width:250px;height:28px;border:1px solid #d2d6de;background:#fff"></div>
<div class="tx" style="left:848px;top:226.57px;font-size:13.5px;color:#333;">Casualty</div>
<div class="tx" style="left:983px;top:226.57px;font-size:13.5px;color:#333;">Old Patient</div>
<div class="abs" style="left:848px;top:248px;width:115px;height:28px;border:1px solid #d2d6de;background:#fff"></div>
<div class="tx" style="left:865.5px;top:256.00px;font-size:13px;color:#555;">No</div>
<svg class="abs" style="left:950px;top:259px" width="7" height="6" viewBox="0 0 7 6"><path d="M0.3 0.5h6.4L3.5 5.5z" fill="#444"/></svg>
<div class="abs" style="left:983px;top:248px;width:115px;height:28px;border:1px solid #d2d6de;background:#fff"></div>
<div class="tx" style="left:1000.5px;top:256.00px;font-size:13px;color:#555;">No</div>
<svg class="abs" style="left:1085px;top:259px" width="7" height="6" viewBox="0 0 7 6"><path d="M0.3 0.5h6.4L3.5 5.5z" fill="#444"/></svg>
<div class="tx" style="left:848px;top:293.57px;font-size:13.5px;color:#333;">TPA</div>
<div class="tx" style="left:983px;top:293.57px;font-size:13.5px;color:#333;">Reference</div>
<div class="abs" style="left:848px;top:315px;width:115px;height:28px;border:1px solid #d2d6de;background:#fff"></div>
<div class="tx" style="left:865.5px;top:323.00px;font-size:13px;color:#555;">Select</div>
<svg class="abs" style="left:950px;top:326px" width="7" height="6" viewBox="0 0 7 6"><path d="M0.3 0.5h6.4L3.5 5.5z" fill="#444"/></svg>
<div class="abs" style="left:983px;top:315px;width:115px;height:28px;border:1px solid #d2d6de;background:#fff"></div>
<div class="tx" style="left:848px;top:360.57px;font-size:13.5px;color:#333;">Consultant Doctor</div>
<div class="abs" style="left:848px;top:382px;width:250px;height:28px;border:1px solid #d2d6de;background:#fff"></div>
<div class="tx" style="left:865px;top:390.00px;font-size:13px;color:#555;">jhon smith</div>
<svg class="abs" style="left:1085px;top:393px" width="7" height="6" viewBox="0 0 7 6"><path d="M0.3 0.5h6.4L3.5 5.5z" fill="#444"/></svg>
<div class="tx" style="left:848px;top:428.07px;font-size:13.5px;color:#333;">Standard Charge</div>
<div class="tx" style="left:848px;top:446.57px;font-size:13.5px;color:#333;">($)</div>
<div class="abs" style="left:848px;top:468px;width:115px;height:28px;border:1px solid #d2d6de;background:#eee"></div>
<div class="tx" style="left:861.5px;top:476.00px;font-size:13px;color:#555;">500</div>
<div class="tx" style="left:983px;top:428.07px;font-size:13.5px;color:#333;">Amount ($)<span style="color:#e8384f;font-size:11px;position:relative;top:0px;margin-left:3px">*</span></div>
<div class="abs" style="left:983px;top:449px;width:115px;height:28px;border:1px solid #d2d6de;background:#fff"></div>
<div class="tx" style="left:996px;top:457.00px;font-size:13px;color:#555;">500</div>
<div class="tx" style="left:848px;top:514.07px;font-size:13.5px;color:#333;">Payment Mode</div>
<div class="abs" style="left:848px;top:535px;width:250px;height:28px;border:1px solid #d2d6de;background:#fff"></div>
<div class="tx" style="left:865px;top:543.00px;font-size:13px;color:#555;">Cash</div>
<svg class="abs" style="left:1085px;top:546px" width="7" height="6" viewBox="0 0 7 6"><path d="M0.3 0.5h6.4L3.5 5.5z" fill="#444"/></svg>
<div class="abs" style="left:248px;top:578px;width:870px;height:1px;background:#f0f0f0"></div>
<div class="abs" style="left:1048px;top:594px;width:55px;height:28px;background:#2196f0;border-radius:3px"></div>
<div class="tx" style="left:1060.5px;top:601.12px;font-size:13.8px;color:#fff;font-weight:bold;letter-spacing:-0.2px">Save</div>
</div><!--/mbody-->
</body></html>
